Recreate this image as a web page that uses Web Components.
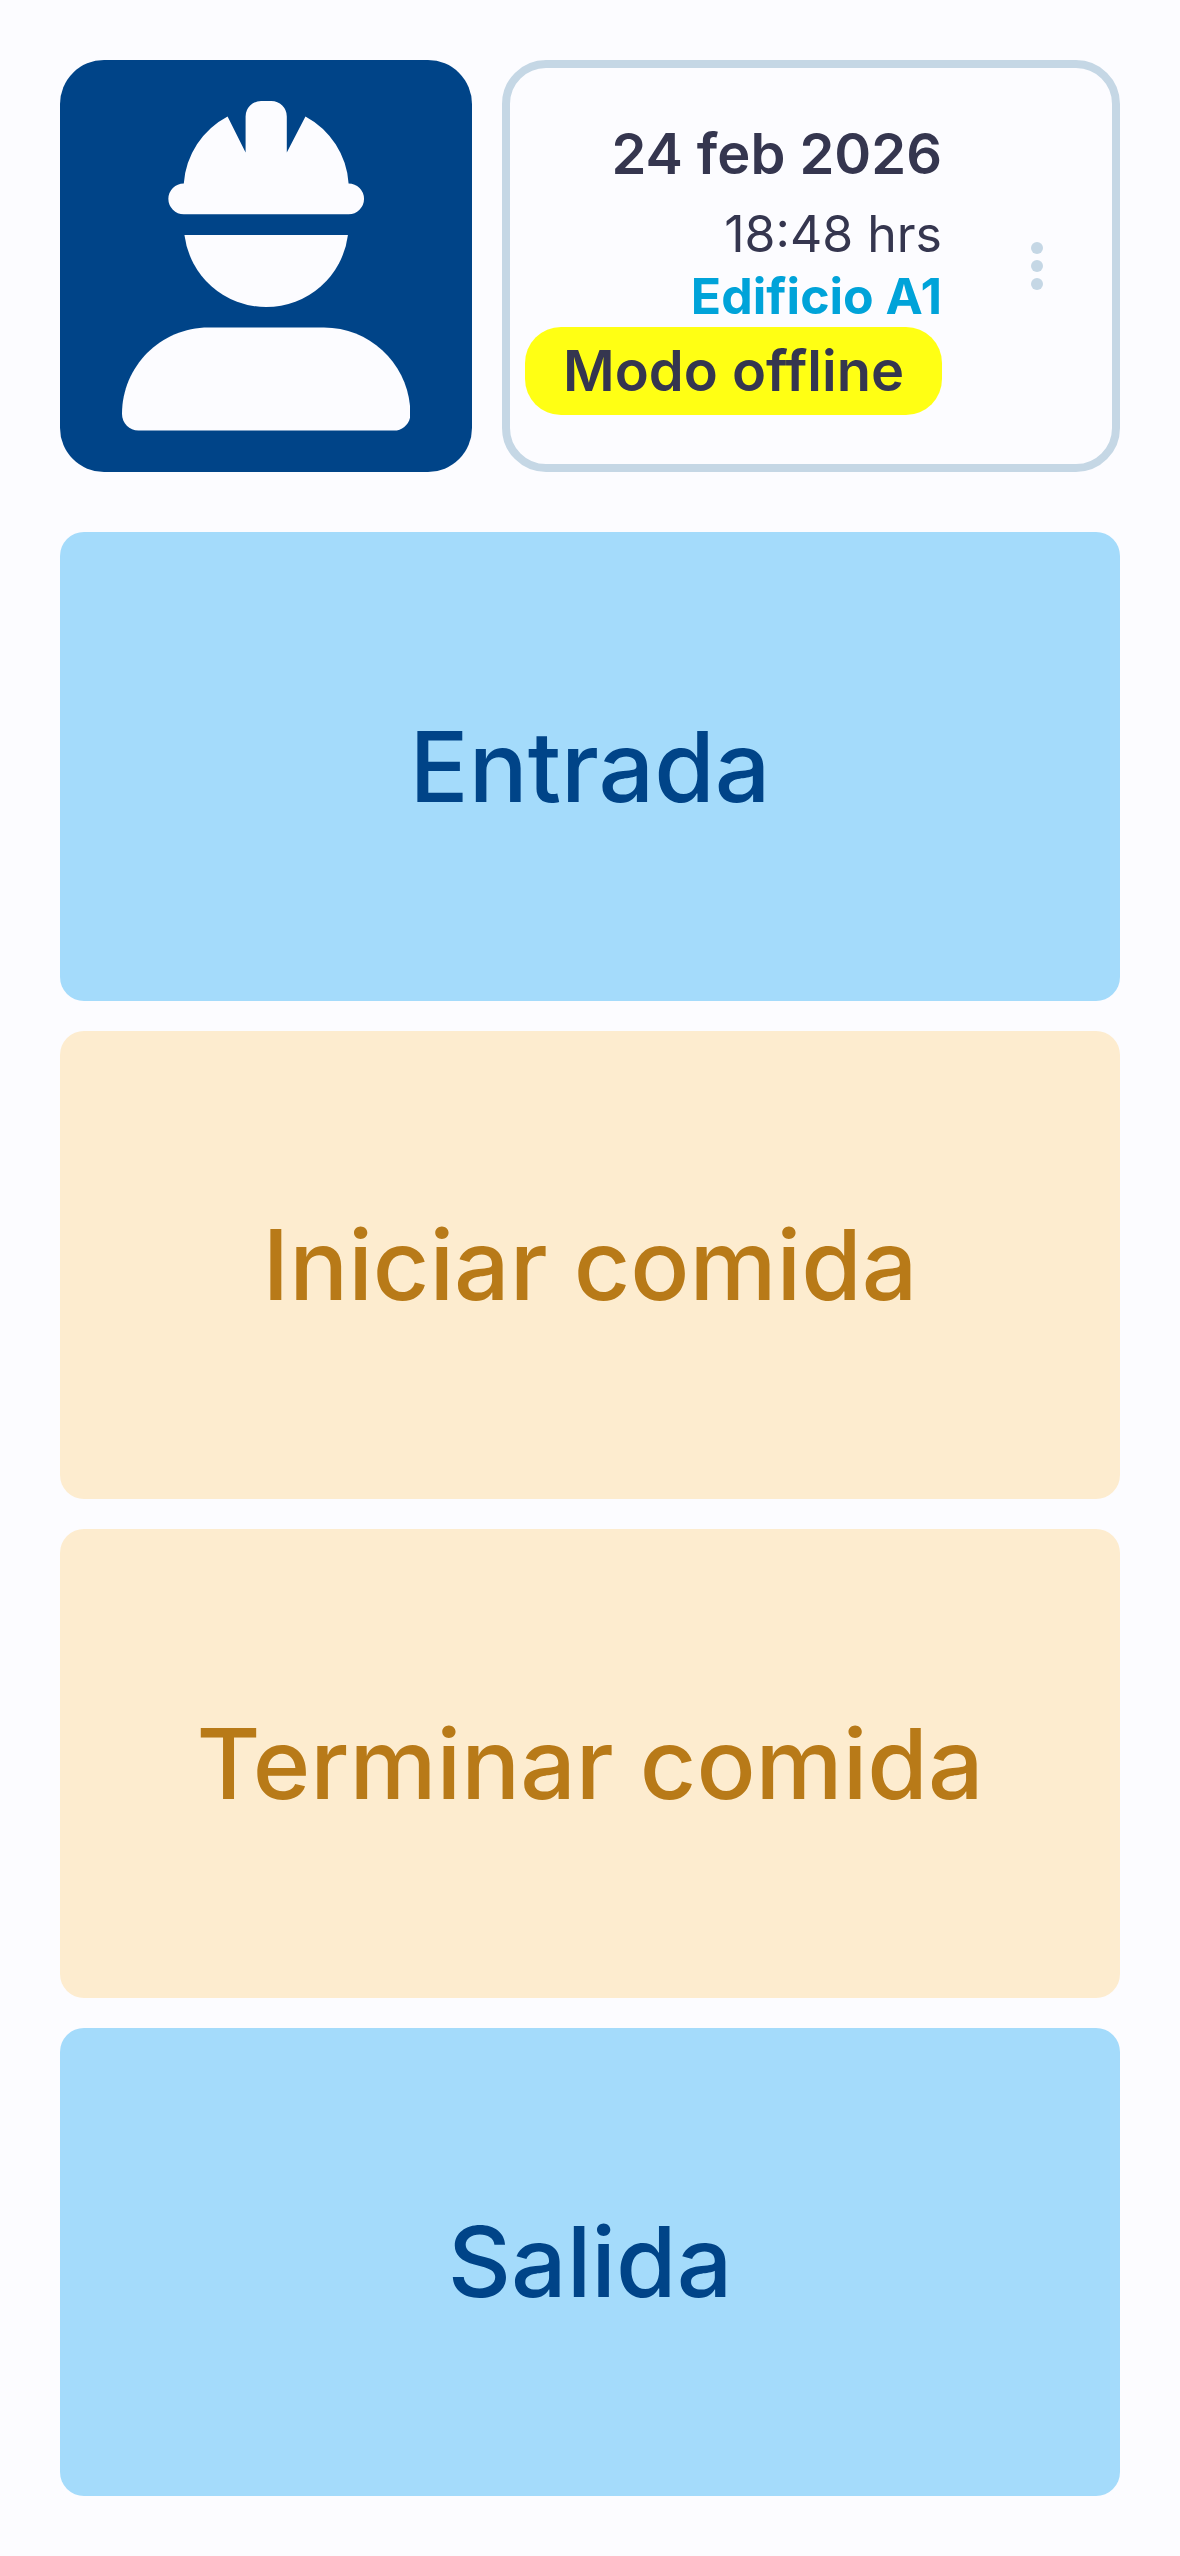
<!DOCTYPE html>
<html lang="es">
<head>
<meta charset="utf-8">
<meta name="viewport" content="width=device-width, initial-scale=1">
<title>Registro de asistencia</title>
<style>
  body {
    margin: 0;
    background: #fcfcff;
    font-family: Inter, "Liberation Sans", sans-serif;
  }
</style>
</head>
<body>
<attendance-screen>
  <worker-avatar slot="header"></worker-avatar>
  <status-card slot="header">
    <span slot="date">24 feb 2026</span>
    <span slot="time">18:48 hrs</span>
    <span slot="place">Edificio A1</span>
    <span slot="mode">Modo offline</span>
  </status-card>
  <action-button>Entrada</action-button>
  <action-button kind="meal">Iniciar comida</action-button>
  <action-button kind="meal">Terminar comida</action-button>
  <action-button>Salida</action-button>
</attendance-screen>

<script>
class AttendanceScreen extends HTMLElement {
  constructor() {
    super();
    this.attachShadow({ mode: "open" });
  }

  connectedCallback() {
    this.shadowRoot.innerHTML = `
    <style>
    :host {
      display: flex;
      flex-direction: column;
      gap: 60px;
      box-sizing: border-box;
      min-height: 100vh;
      padding: 60px;
    }
    header {
      display: grid;
      grid-template-columns: 2fr 3fr;
      gap: 30px;
    }
    main {
      flex: 1;
      display: flex;
      flex-direction: column;
      gap: 30px;
    }
    </style>
    <header><slot name="header"></slot></header>
    <main><slot></slot></main>
  `;
  }
}

class WorkerAvatar extends HTMLElement {
  constructor() {
    super();
    this.attachShadow({ mode: "open" });
  }

  connectedCallback() {
    this.shadowRoot.innerHTML = `
    <style>
    :host {
      display: flex;
      align-items: center;
      justify-content: center;
      aspect-ratio: 1;
      border-radius: 44px;
      background: #004488;
    }
    svg {
      width: 70%;
      height: 80%;
      fill: #fcfcff;
    }
    </style>
    <svg viewBox="0 0 448 512" role="img" aria-label="Trabajador">
      <path d="M96 128A128 128 0 0 1 164 24L192 80V24A24 24 0 0 1 216 0H232A24 24 0 0 1 256 24V80L285 24A128 128 0 0 1 352 128A24 24 0 0 1 352 176H96A24 24 0 0 1 96 128Z"/>
      <path d="M97 208H351A128 128 0 0 1 97 208Z"/>
      <path d="M0 486.400C0 412.200 60.200 352 134.400 352H313.600C387.800 352 448 412.200 448 486.400C448 500.500 436.500 512 422.400 512H25.600C11.500 512 0 500.500 0 486.400Z"/>
    </svg>
  `;
  }
}

class StatusCard extends HTMLElement {
  constructor() {
    super();
    this.attachShadow({ mode: "open" });
  }

  connectedCallback() {
    this.shadowRoot.innerHTML = `
    <style>
    :host {
      display: flex;
      align-items: center;
      justify-content: flex-end;
      gap: 20px;
      box-sizing: border-box;
      border: 8px solid #c5d7e5;
      border-radius: 44px;
      color: #35364f;
    }
    .info {
      display: flex;
      flex-direction: column;
      align-items: flex-end;
      font-size: 50px;
      line-height: 62px;
      white-space: nowrap;
    }
    .date {
      margin-bottom: 12px;
      font-size: 56px;
      line-height: 74px;
      font-weight: 600;
    }
    .place {
      color: #00a3d9;
      font-weight: 700;
    }
    .mode {
      padding: 13px 38px;
      border-radius: 36px;
      background: #ffff14;
      font-size: 56px;
      font-weight: 600;
    }
    button {
      display: flex;
      flex-direction: column;
      align-items: center;
      justify-content: center;
      align-self: stretch;
      width: 150px;
      padding: 0;
      border: 0;
      background: none;
      cursor: pointer;
    }
    svg {
      width: 12px;
      height: 48px;
      fill: #c5d7e5;
    }
    </style>
    <div class="info">
      <div class="date"><slot name="date"></slot></div>
      <div><slot name="time"></slot></div>
      <div class="place"><slot name="place"></slot></div>
      <div class="mode"><slot name="mode"></slot></div>
    </div>
    <button type="button" aria-label="Opciones">
      <svg viewBox="0 0 12 48" aria-hidden="true">
        <circle cx="6" cy="6" r="6"/>
        <circle cx="6" cy="24" r="6"/>
        <circle cx="6" cy="42" r="6"/>
      </svg>
    </button>
  `;
  }
}

class ActionButton extends HTMLElement {
  constructor() {
    super();
    this.attachShadow({ mode: "open" });
  }

  connectedCallback() {
    this.shadowRoot.innerHTML = `
    <style>
    :host {
      flex: 1;
      display: flex;
      --fill: #a4dbfb;
      --ink: #004488;
    }
    :host([kind="meal"]) {
      --fill: #fdeccf;
      --ink: #b87a18;
    }
    button {
      flex: 1;
      padding: 24px;
      border: 0;
      border-radius: 24px;
      background: var(--fill);
      color: var(--ink);
      font: inherit;
      font-size: 98px;
      font-weight: 500;
      cursor: pointer;
    }
    </style>
    <button type="button"><slot></slot></button>
  `;
  }
}

customElements.define("attendance-screen", AttendanceScreen);
customElements.define("worker-avatar", WorkerAvatar);
customElements.define("status-card", StatusCard);
customElements.define("action-button", ActionButton);
</script>
</body>
</html>
